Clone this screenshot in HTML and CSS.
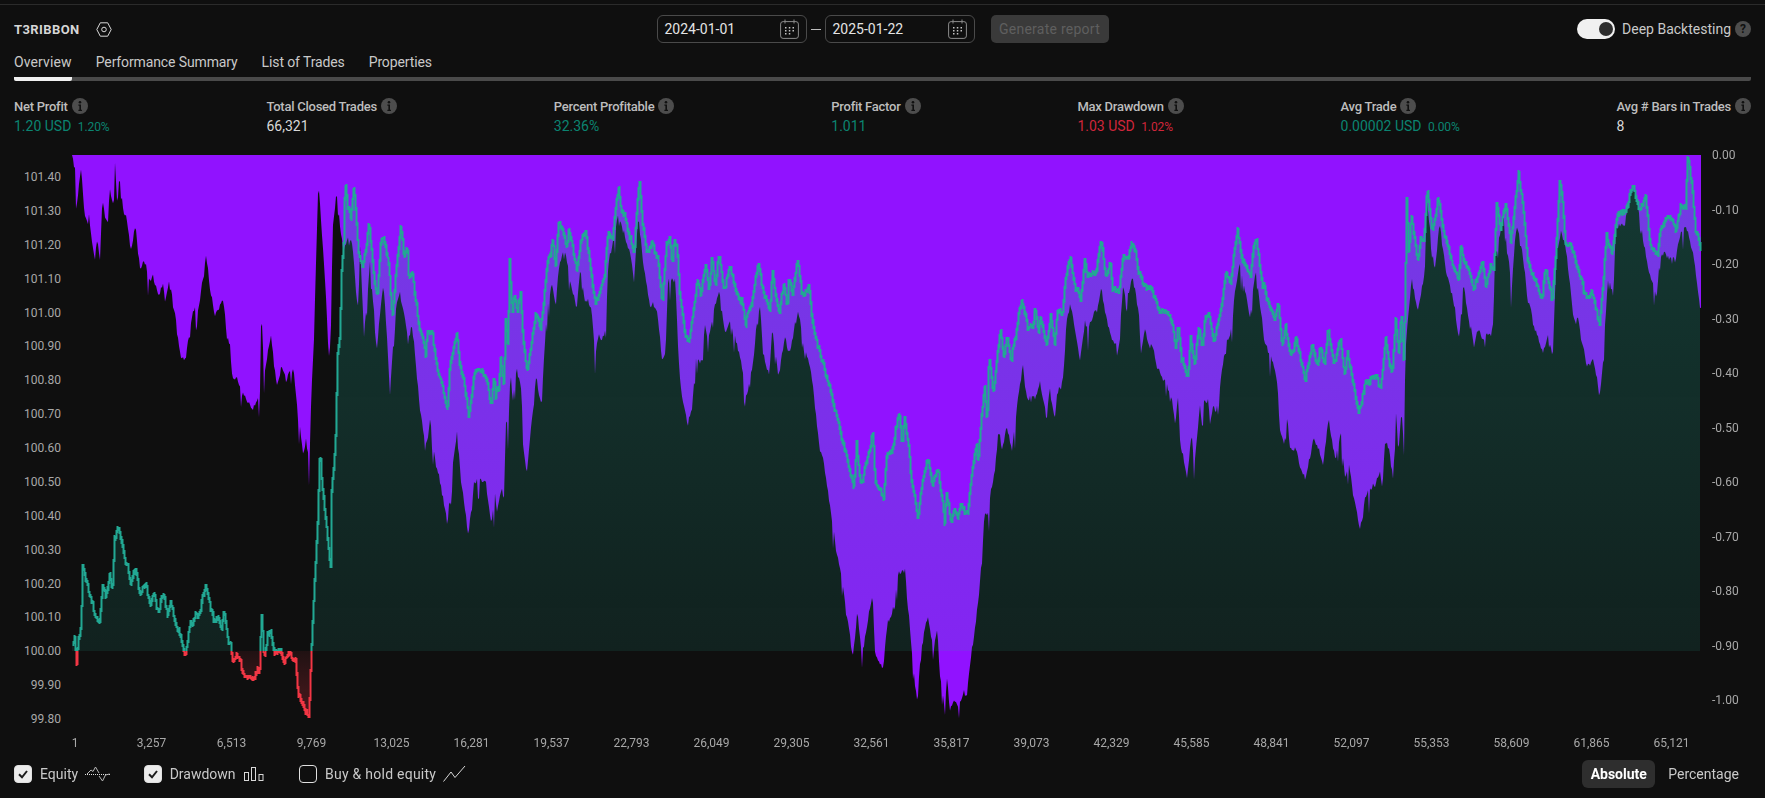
FILE: index.html
```html
<!DOCTYPE html>
<html lang="en">
<head>
<meta charset="utf-8">
<title>T3RIBBON Strategy Report</title>
<link rel="stylesheet" href="styles.css">
</head>
<body>
<svg class="defs" width="0" height="0" aria-hidden="true">
  <symbol id="info" viewBox="0 0 16 16"><circle cx="8" cy="8" r="8" fill="#4d4d4d"/><circle cx="8" cy="4.300" r="1.300" fill="#101010"/><path d="M6.400 6.600H9v5.200h1v1.100H6.400v-1.100h1V7.700H6.400z" fill="#101010"/></symbol>
  <symbol id="cal" viewBox="0 0 19 20" fill="none"><rect x=".6" y="2.600" width="17.800" height="16.800" rx="2.500" stroke="#8c8c8c" stroke-width="1"/><path d="M5 .5v4M14 .5v4" stroke="#8c8c8c"/><g fill="#c4c4c4"><rect x="5" y="8" width="1.500" height="1.500"/><rect x="8.800" y="8" width="1.500" height="1.500"/><rect x="12.500" y="8" width="1.500" height="1.500"/><rect x="5" y="11" width="1.500" height="1.500"/><rect x="8.800" y="11" width="1.500" height="1.500"/><rect x="12.500" y="11" width="1.500" height="1.500"/><rect x="5" y="14" width="1.500" height="1.500"/><rect x="8.800" y="14" width="1.500" height="1.500"/></g></symbol>
  <symbol id="tick" viewBox="0 0 18 18" fill="none"><path d="M5 9.300l3 3 5-6.300" stroke="#1b1b1b" stroke-width="2"/></symbol>
</svg>
<main class="report">
  <div class="topline"></div>
  <header class="toolbar">
    <div class="title-wrap">
      <span class="title">T3RIBBON</span>
      <svg class="hex" width="16" height="15" viewBox="0 0 16 15" fill="none"><path d="M4.300.8h7.400L15.200 7.500l-3.500 6.700H4.300L.8 7.500z" stroke="#d8d8d8"/><circle cx="8" cy="7.500" r="2.300" stroke="#d8d8d8"/></svg>
    </div>
    <div class="range">
      <div class="date"><span>2024-01-01</span><svg class="cal" width="19" height="20"><use href="#cal"/></svg></div>
      <span class="dash"></span>
      <div class="date"><span>2025-01-22</span><svg class="cal" width="19" height="20"><use href="#cal"/></svg></div>
      <button class="generate" type="button">Generate report</button>
    </div>
    <div class="deep">
      <span class="switch"><span class="knob"></span></span>
      <span class="deep-label">Deep Backtesting</span>
      <span class="help">?</span>
    </div>
  </header>

  <nav class="tabs">
    <a class="tab active">Overview</a>
    <a class="tab">Performance Summary</a>
    <a class="tab">List of Trades</a>
    <a class="tab">Properties</a>
  </nav>

  <section class="metrics">
    <div class="metric"><div class="label">Net Profit <svg class="info"><use href="#info"/></svg></div><div class="value up">1.20 USD <small>1.20%</small></div></div>
    <div class="metric"><div class="label">Total Closed Trades <svg class="info"><use href="#info"/></svg></div><div class="value">66,321</div></div>
    <div class="metric"><div class="label">Percent Profitable <svg class="info"><use href="#info"/></svg></div><div class="value up">32.36%</div></div>
    <div class="metric"><div class="label">Profit Factor <svg class="info"><use href="#info"/></svg></div><div class="value up">1.011</div></div>
    <div class="metric"><div class="label">Max Drawdown <svg class="info"><use href="#info"/></svg></div><div class="value down">1.03 USD <small>1.02%</small></div></div>
    <div class="metric"><div class="label">Avg Trade <svg class="info"><use href="#info"/></svg></div><div class="value up">0.00002 USD <small>0.00%</small></div></div>
    <div class="metric"><div class="label">Avg # Bars in Trades <svg class="info"><use href="#info"/></svg></div><div class="value">8</div></div>
  </section>

  <section class="chart">
    <div class="axis axis-left">
      <span>101.40</span><span>101.30</span><span>101.20</span><span>101.10</span><span>101.00</span><span>100.90</span><span>100.80</span><span>100.70</span><span>100.60</span><span>100.50</span><span>100.40</span><span>100.30</span><span>100.20</span><span>100.10</span><span>100.00</span><span>99.90</span><span>99.80</span>
    </div>
    <canvas id="plot" class="plot" width="1630" height="573"></canvas>
    <div class="axis axis-right">
      <span>0.00</span><span>-0.10</span><span>-0.20</span><span>-0.30</span><span>-0.40</span><span>-0.50</span><span>-0.60</span><span>-0.70</span><span>-0.80</span><span>-0.90</span><span>-1.00</span>
    </div>
  </section>

  <div class="xaxis">
    <span class="first">1</span><span>3,257</span><span>6,513</span><span>9,769</span><span>13,025</span><span>16,281</span><span>19,537</span><span>22,793</span><span>26,049</span><span>29,305</span><span>32,561</span><span>35,817</span><span>39,073</span><span>42,329</span><span>45,585</span><span>48,841</span><span>52,097</span><span>55,353</span><span>58,609</span><span>61,865</span><span>65,121</span>
  </div>

  <footer class="legend">
    <div class="toggles">
      <label class="toggle">
        <span class="box on"><svg width="18" height="18"><use href="#tick"/></svg></span>Equity
        <svg class="glyph" width="26" height="18" viewBox="0 0 26 18" fill="none"><path d="M0 9.500h26" stroke="#e0e0e0" stroke-dasharray="1 1"/><path d="M2 9l4-4 2 1.500L10.500 2 14 8M14 11l3.500 5 3-6 4-1" stroke="#b8b8b8"/></svg>
      </label>
      <label class="toggle">
        <span class="box on"><svg width="18" height="18"><use href="#tick"/></svg></span>Drawdown
        <svg class="glyph bars" width="20" height="16" viewBox="0 0 20 16" fill="none" stroke="#d8d8d8"><rect x=".5" y="6.500" width="4" height="8"/><rect x="7.500" y="1.500" width="4" height="13"/><rect x="15" y="8.500" width="4" height="6"/></svg>
      </label>
      <label class="toggle">
        <span class="box"></span>Buy &amp; hold equity
        <svg class="glyph" width="23" height="18" viewBox="0 0 23 18" fill="none"><path d="M.5 16.500L8 7l4 5.500L22 1" stroke="#d8d8d8"/></svg>
      </label>
    </div>
    <div class="modes">
      <button class="mode selected" type="button">Absolute</button>
      <button class="mode" type="button">Percentage</button>
    </div>
  </footer>
</main>
<script src="app.js"></script>
</body>
</html>
```
FILE: styles.css
```css
* { box-sizing: border-box; }
html, body { margin: 0; padding: 0; background: #0f0f0f; }
body { width: 1765px; height: 798px; overflow: hidden; color: #d1d1d1; font-family: Roboto, "Liberation Sans", sans-serif; font-size: 14px; }
.defs { position: absolute; }
.report { padding: 0 14px; }
.topline { height: 1px; margin: 4px -14px 0; background: #2b2b2b; }

.toolbar { display: grid; grid-template-columns: 1fr auto 1fr; align-items: center; height: 28px; margin-top: 10px; }
.title-wrap { display: flex; align-items: center; }
.title { width: 82px; font-size: 13px; font-weight: 700; letter-spacing: .4px; color: #d6d6d6; }
.hex { display: block; }
.range { display: flex; align-items: center; }
.date { display: flex; align-items: center; justify-content: space-between; width: 150px; height: 28px; padding: 0 7px; border: 1px solid #4a4a4a; border-radius: 6px; color: #e4e4e4; }
.cal { display: block; }
.dash { width: 10px; height: 1px; margin: 0 4px; background: #bdbdbd; }
.generate { width: 118px; height: 28px; margin-left: 16px; padding: 0; border: 0; border-radius: 5px; background: #3a3a3a; color: #5f5f5f; font: inherit; letter-spacing: .25px; }
.deep { display: flex; align-items: center; justify-content: flex-end; }
.switch { display: flex; align-items: center; justify-content: flex-end; width: 38px; height: 20px; padding-right: 2px; border-radius: 10px; background: #f0f0f0; }
.knob { width: 14px; height: 14px; border-radius: 50%; background: #2e2e2e; }
.deep-label { margin-left: 7px; color: #c9c9c9; white-space: nowrap; }
.help { display: flex; align-items: center; justify-content: center; width: 16px; height: 16px; margin-left: 4px; border-radius: 50%; background: #4d4d4d; color: #101010; font-size: 12px; font-weight: 700; }

.tabs { display: flex; gap: 24px; height: 30px; margin-top: 8px; border-bottom: 4px solid #4a4a4a; border-radius: 2px; }
.tab { height: 30px; line-height: 22px; letter-spacing: -.12px; color: #c9c9c9; white-space: nowrap; }
.tab.active { border-bottom: 4px solid #f0f0f0; border-radius: 2px; letter-spacing: .12px; }

.metrics { display: flex; justify-content: space-between; padding-top: 16px; }
.label { display: flex; align-items: center; gap: 4px; height: 18px; font-size: 13px; font-weight: 500; letter-spacing: -.25px; color: #bdbdbd; white-space: nowrap; }
.info { display: block; width: 16px; height: 16px; }
.value { height: 20px; line-height: 22px; font-size: 14px; color: #d8d8d8; white-space: nowrap; }
.value small { margin-left: 3px; font-size: 12px; letter-spacing: -.1px; }
.up { color: #0b8471; }
.down { color: #d1263b; }

.chart { display: flex; margin-top: 12px; }
.axis { display: flex; flex-direction: column; justify-content: space-between; font-size: 12px; line-height: 16px; color: #a8a8a8; }
.axis-left { width: 58px; height: 580px; padding: 22px 11px 0 0; text-align: right; }
.axis-right { height: 561px; padding-left: 10px; }
.plot { display: block; width: 1630px; height: 573px; margin-top: 8px; }

.xaxis { display: grid; grid-template-columns: repeat(21, 80px); margin: 7px 0 0 17.500px; font-size: 12px; line-height: 16px; color: #a8a8a8; text-align: center; }
.xaxis .first { padding-left: 7px; }

.legend { display: flex; justify-content: space-between; align-items: center; height: 28px; margin-top: 9px; }
.toggles { display: flex; gap: 32.500px; }
.toggle { display: flex; align-items: center; color: #c9c9c9; white-space: nowrap; }
.toggle:last-child { letter-spacing: .25px; }
.box { display: block; width: 18px; height: 18px; margin-right: 8px; border: 1px solid #e0e0e0; border-radius: 4px; }
.box svg { display: block; margin: -1px; }
.box.on { background: #ececec; }
.glyph { display: block; margin-left: 7px; }
.bars { margin-left: 8px; margin-right: 3px; }
.modes { display: flex; align-items: center; gap: 5px; padding-right: 4px; }
.mode { height: 28px; padding: 0 8px; border: 0; border-radius: 6px; background: transparent; color: #c9c9c9; font: inherit; }
.mode.selected { width: 73px; padding: 0; background: #2e2e2e; color: #fff; font-weight: 700; }
```
FILE: app.js
```js
(function () {
  var X = 72, Y = 155;           // page position of the plot
  var BASE = 651;                // equity = 100.00 line

  var drawdown = [
    [60, 150, [36,15,45,60,47,130,52,160,60,45,68,120,76,205,85,185,95,260,105,310,112,285,120,325,127,165,140,220,150,125,160,170,165,45,172,160,178,55,190,175,200,205,212,315,226,245,240,360,258,350,268,405,280,380,300,430,310,410,315,470,330,395,340,470,360,600,377,635,395,510,415,465,425,395,438,320,450,420,465,495,490,450,500,565,510,580,515,670,535,690,558,755,578,765,600,735,604,465,612,670,633,550,650,720,665,640,680,710,700,635,715,820,730,910,738,860,748,945,755,720,762,570,775,100,785,250,795,400,806,570,812,585,818,230,830,110,842,250,850,300,865,260,878,300,895,480,900,300,912,545,930,330,950,610,970,400,990,720,1005,500,1020,430]],
    [400, 150, [8,470,20,550,30,570,35,530,50,660,60,770,75,890,90,815,100,890,125,1040,142,1130,155,960,165,900,172,845,178,940,205,1175,222,990,235,975,258,1010,275,1105,285,1030,290,1090,305,1030,312,1030,318,780,325,830,332,650,338,745,350,660,365,720,368,860,380,955,395,830,407,690,425,760,430,650,440,490,455,410,468,470,475,370,490,310,500,325,512,390,530,480,540,375,555,440,575,490,585,630,595,570,605,585,618,530,625,360,640,260,655,195,670,240,690,300,703,395,715,200,735,370,750,470,770,460,785,635,797,600,805,380,826,380,835,610,845,740,862,830,875,770,890,620,903,635,915,520,925,570,945,470,958,425,975,550,990,510,1005,560,1020,630]],
    [740, 150, [0,620,20,730,40,640,55,480,60,480,70,610,88,670,97,530,115,685,135,570,150,620,165,520,175,480,190,600,210,650,225,780,240,900,262,1010,275,1090,290,1200]],
    [800, 400, [125,520,140,660,160,780,172,630,185,760,200,680,218,600,225,750,250,800,262,660,280,620,298,520,316,500,322,600,335,740,352,920,362,740,385,660,400,770,412,690,420,830,435,955,440,830,450,940,465,900,475,930,490,875,500,895,518,730,530,650,540,530]],
    [740, 150, [727,1200,733,1100,745,1100,752,1010,765,950,775,830,785,890,800,820,815,910,835,730,848,655,865,750,885,740,900,710,920,820,930,715,945,810,955,710,970,690,980,520,990,460,1005,550,1020,620]],
    [1060, 150, [25,600,30,460,40,540,50,600,60,620,75,510,85,520,105,490,125,410,135,490,155,560,175,600,190,420,205,430,215,370,225,420,240,530,245,600,255,550,275,590,290,650,310,700,330,720,345,830,355,740,360,860,382,985,395,850,403,940,420,760,425,840,432,760,445,740,450,815,468,735,475,790,482,680,500,570,515,540,525,420,540,335,555,420,570,495,587,360,600,460,615,580,635,640,650,690,660,830,672,885,682,800,690,895,705,905,737,1000,762,875,790,945,805,805,825,930,842,845,855,980,868,950,878,1030,900,1145,920,1030,945,1000]],
    [1380, 150, [0,980,7,1030,15,880,25,880,40,980,48,790,55,895,65,780,72,925,76,620,85,490,95,380,115,490,135,350,140,170,165,350,178,215,195,340,215,430,238,560,250,400,265,500,282,590,292,530,310,580,325,560,340,530,345,330,370,200,385,320,395,420,410,220,425,300,443,460,460,530,490,600,505,540,518,630,530,310,543,225,560,330,580,490,600,530,620,650,640,640,658,740,672,600,680,380,700,430,708,240,730,225,758,110,780,210,805,350,830,430,840,310,870,320,885,320,905,230,925,240,945,350,960,480,965,480]]
  ];

  var equity = [
    [50, 500, [65,440,72,400,78,485,82,420,92,370,95,180,105,240,118,290,125,310,135,350,148,360,155,240,165,290,178,230,185,270,192,105,205,80,220,170,232,200,240,260,255,200,270,285,285,265,295,310,310,290,320,330,340,285,350,350,360,300,380,380,395,430,405,458,420,370,440,350,450,320,465,250,480,320,490,365,505,345,512,390,520,335,530,410,540,430,545,485,560,460,575,510,590,530,605,540,615,520,628,520,632,335,640,480,650,410,660,400,672,460,690,455,700,500,720,460,735,480,742,580,760,620,775,650,782,455,790,270,800,100]],
    [60, 150, [778,900,785,1010,795,1100,810,1250,812,1030,820,950,826,850,826,745,830,610,838,545,842,370,850,260,853,85,860,170,870,200,880,90,888,220,895,320,905,350,925,230,940,370,950,450,960,280,970,260,985,350,995,520,1005,380,1020,230]],
    [400, 150, [5,245,10,330,20,290,25,400,35,360,42,430,50,490,65,570,75,620,80,550,95,560,105,630,115,670,125,700,140,775,148,645,155,610,168,555,178,640,190,690,205,805,220,665,240,660,255,690,272,760,280,670,285,750,295,710,300,620,310,700,315,500,322,580,327,325,335,500,340,430,350,490,360,445,368,580,380,665,395,560,405,480,420,540,430,450,440,340,448,330,455,260,465,350,475,205,490,250,500,300,503,240,520,320,528,370,540,285,555,240,575,390,585,465,600,410,612,385,622,260,635,270,645,170,654,115,662,195,675,200,690,270,700,320,708,195,716,80,725,220,740,310,752,290,770,320,785,460,797,290,808,255,815,340,820,255,830,300,838,450,850,530,862,585,875,510,890,390,900,440,915,345,925,420,933,325,945,400,955,310,970,410,990,355,1005,420,1020,460]],
    [740, 150, [3,450,15,520,35,450,55,330,70,440,88,480,95,355,105,440,117,490,130,390,140,460,145,365,155,430,172,320,185,430,205,420,215,510,240,620,260,700,280,770,300,850,320,930,340,1020,348,890,362,1005,375,935,397,850,403,980,415,1020,430,1030,437,930,455,910,465,840,476,805,485,890,492,805,505,880,512,1000,532,1105,545,990,563,920,575,1010,592,945,605,1050,612,1125,617,1020,632,1115,640,1075,652,1110,660,1065,680,1090,695,965,708,900,712,950,722,810,732,720,740,830,745,610,758,720,770,610,780,535,790,620,800,550,812,630,825,560,835,480,845,455,860,520,880,530,883,460,893,550,900,490,918,575,930,490,942,570,950,495,965,490,975,380,990,335,1005,410,1020,450]],
    [1060, 150, [72,335,82,390,105,365,122,275,135,370,150,345,155,410,175,430,187,310,205,320,212,285,225,310,230,350,245,400,275,425,295,480,335,510,345,585,353,510,362,610,380,680,390,575,403,650,415,525,425,585,432,510,445,490,460,575,475,505,482,480,495,380,510,400,522,300,532,245,545,320,570,370,578,280,587,270,605,395,630,470,640,520,653,465,665,600,675,530,690,625,705,575,735,685,755,595,772,650,777,590,790,650,802,545,820,640,840,570,852,670,860,610,875,690,895,780,915,690,945,690]],
    [1380, 150, [0,710,15,575,35,670,45,515,55,620,62,495,70,635,78,145,85,320,92,200,110,330,120,265,130,280,140,120,155,240,172,145,195,260,215,330,235,385,240,280,250,340,262,345,280,430,290,380,305,340,315,400,330,345,340,370,348,165,360,230,375,145,390,280,405,140,414,75,425,155,440,320,455,375,485,430,492,350,515,450,525,320,537,95,545,145,555,280,575,310,590,355,610,430,635,440,657,515,678,255,695,310,710,190,735,190,757,100,775,180,795,140,808,270,830,325,840,240,860,205,870,190,885,240,900,165,915,170,921,15,935,100,945,240,962,305]]
  ];

  // crop-based samples -> page coordinates, strictly increasing in x
  function points(segments) {
    var out = [];
    segments.forEach(function (s) {
      for (var i = 0; i < s[2].length; i += 2) {
        var x = s[0] + s[2][i] / 3, y = s[1] + s[2][i + 1] / 3;
        if (!out.length || x > out[out.length - 1][0]) out.push([x, y]);
      }
    });
    return out;
  }

  var seed = 20240101;
  function rnd() {
    seed = (seed + 0x6D2B79F5) | 0;
    var t = Math.imul(seed ^ (seed >>> 15), 1 | seed);
    t = (t + Math.imul(t ^ (t >>> 7), 61 | t)) ^ t;
    return ((t ^ (t >>> 14)) >>> 0) / 4294967296;
  }

  // one value per pixel column: interpolation + wandering noise + fine noise + spikes
  function sample(pts, mid, fine, spike) {
    var out = [], j = 0, wander = 0, target = 0, left = 0;
    var x0 = Math.ceil(pts[0][0]), x1 = Math.floor(pts[pts.length - 1][0]);
    for (var x = x0; x <= x1; x++) {
      while (j < pts.length - 2 && pts[j + 1][0] < x) j++;
      var a = pts[j], b = pts[j + 1];
      var y = a[1] + (b[1] - a[1]) * (x - a[0]) / (b[0] - a[0]);
      if (left-- <= 0) { target = (rnd() - 0.5) * mid; left = 1 + Math.floor(rnd() * 3); }
      wander += (target - wander) * 0.6;
      var n = wander + (rnd() - 0.5) * fine;
      if (rnd() < 0.1) n += rnd() * spike;
      out.push([x - X, y - Y + n]);
    }
    return out;
  }

  var canvas = document.getElementById('plot');
  var ctx = canvas.getContext('2d');
  var W = canvas.width, H = canvas.height, base = BASE - Y;

  function trace(line) {
    ctx.beginPath();
    line.forEach(function (p, i) { if (i) ctx.lineTo(p[0], p[1]); else ctx.moveTo(p[0], p[1]); });
  }
  function clipBand(top, bottom) {
    ctx.beginPath();
    ctx.rect(0, top, W, bottom - top);
    ctx.clip();
  }

  // drawdown: solid area hanging from the top of the plot
  var dd = sample(points(drawdown), 11, 5, 24);
  dd[0][1] = 0;
  trace(dd);
  ctx.lineTo(dd[dd.length - 1][0], 0);
  ctx.lineTo(dd[0][0], 0);
  ctx.closePath();
  ctx.fillStyle = '#9112ff';
  ctx.fill();

  // equity: gradient area to the 100.00 baseline, green above and red below
  var eq = sample(points(equity), 9, 4, 0);
  function area(top, bottom, gradient) {
    ctx.save();
    clipBand(top, bottom);
    trace(eq);
    ctx.lineTo(eq[eq.length - 1][0], base);
    ctx.lineTo(eq[0][0], base);
    ctx.closePath();
    ctx.fillStyle = gradient;
    ctx.fill();
    ctx.restore();
  }
  var up = ctx.createLinearGradient(0, 0, 0, base);
  up.addColorStop(0, 'rgba(34,171,148,0.28)');
  up.addColorStop(1, 'rgba(34,171,148,0.12)');
  area(0, base, up);
  var down = ctx.createLinearGradient(0, base, 0, 570);
  down.addColorStop(0, 'rgba(242,54,69,0.08)');
  down.addColorStop(1, 'rgba(242,54,69,0.3)');
  area(base, H, down);

  // equity line: blocky pixel columns spanning each step
  function columns(top, bottom, colour) {
    ctx.save();
    clipBand(top, bottom);
    ctx.fillStyle = colour;
    for (var i = 1; i < eq.length; i++) {
      var lo = Math.min(eq[i][1], eq[i - 1][1]) - 0.8 - rnd() * 1.6;
      var hi = Math.max(eq[i][1], eq[i - 1][1]) + 0.8 + rnd() * 1.6;
      ctx.fillRect(eq[i][0] - 0.5, Math.round(lo), 2, Math.round(hi - lo));
    }
    ctx.restore();
  }
  columns(0, base, '#22a893');
  columns(base, H, '#f23645');
})();
```
